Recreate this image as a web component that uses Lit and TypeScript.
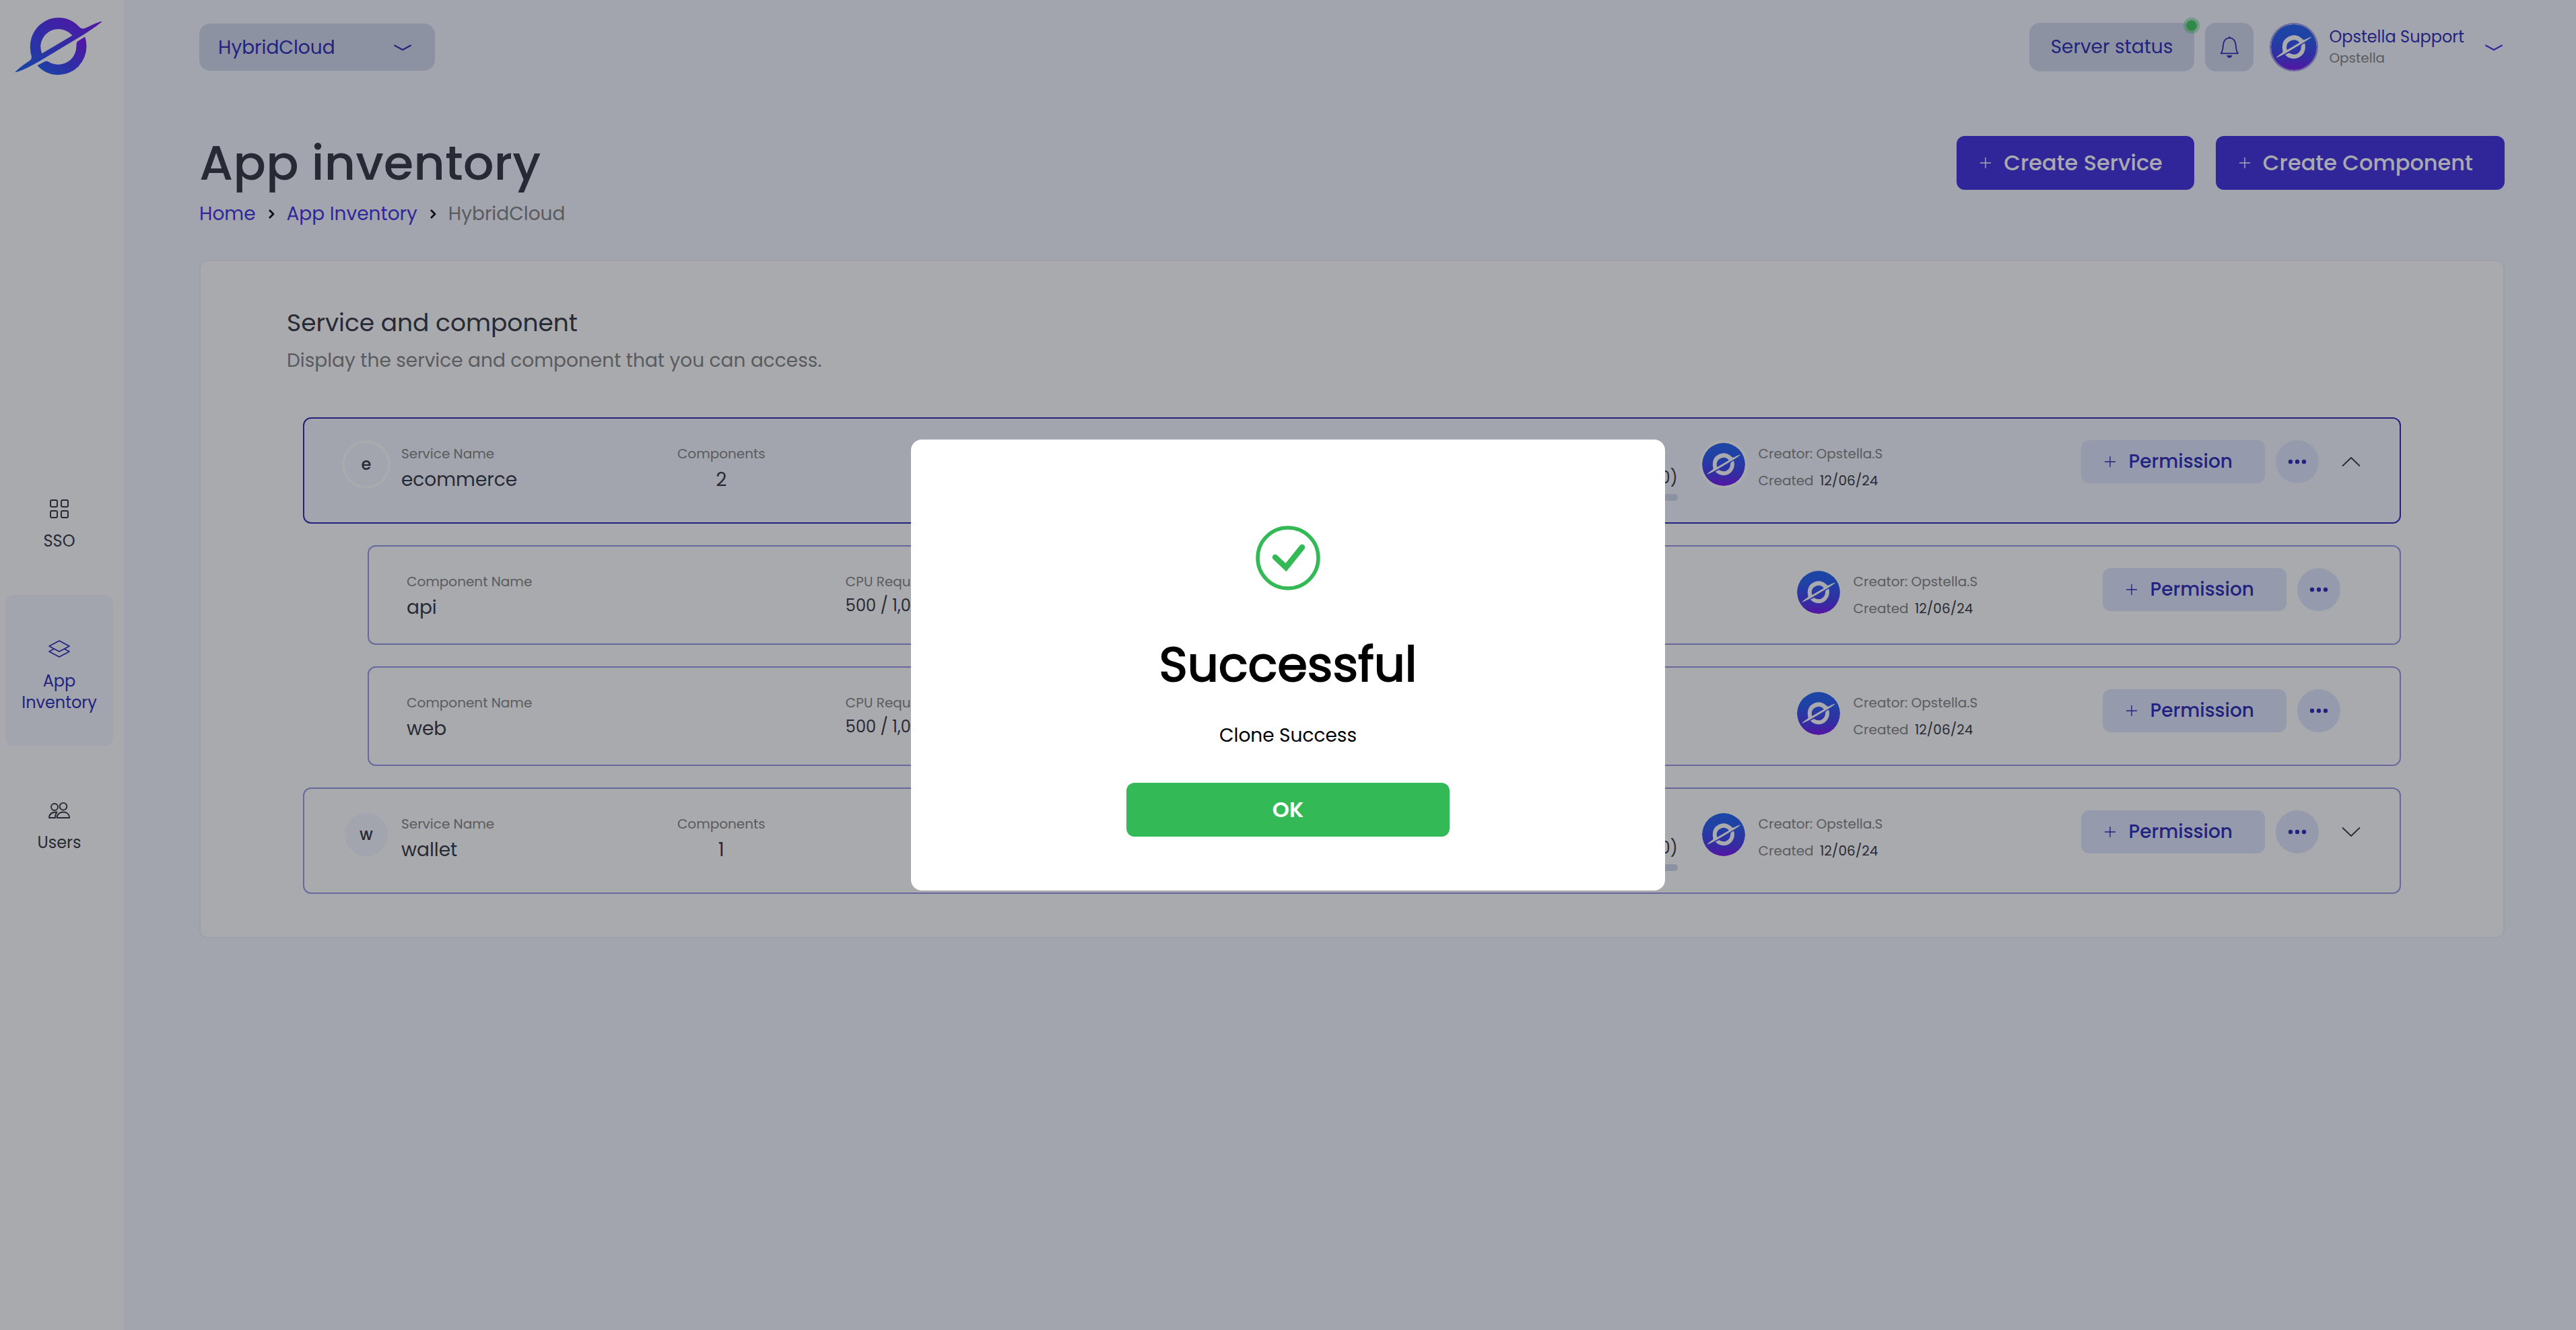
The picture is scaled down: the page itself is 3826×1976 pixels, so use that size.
import { LitElement, html, svg, css, nothing } from "lit";
import { customElement, property, state } from "lit/decorators.js";
import { classMap } from "lit/directives/class-map.js";

const FONT = css`Poppins, Inter, "Noto Sans", sans-serif`;

/* ---------- icons ---------- */

const logoShape = svg`
  <path fill-rule="evenodd" d="M69 317C90 296 112 281 132 268Q144 260 140 244C136 230 135 217 135 204A126 127 0 0 1 340 105C350 114 356 124 368 125C382 126 415 103 450 93Q456 93 450 98C425 118 395 138 372 152L176 270C140 290 105 309 75 318Q66 320 69 317ZM187 236L322 156A80 81 0 0 0 181 204Q181 220 187 236Z"/>
  <path d="M378 162L345 182Q340 186 340 204A80 81 0 0 1 260 285Q235 285 215 272Q208 267 200 271L167 289C190 316 225 331 260 331A125 127 0 0 0 385 204Q385 180 378 162Z"/>`;

const brandLogo = html`
  <svg class="brand" viewBox="67 76 388 257" role="img" aria-label="Opstella">
    <defs>
      <linearGradient id="brand" x1="0" y1="1" x2="1" y2="0">
        <stop offset="0" stop-color="#0f5cf4" />
        <stop offset=".5" stop-color="#3b32f2" />
        <stop offset="1" stop-color="#7a08f2" />
      </linearGradient>
    </defs>
    <g fill="url(#brand)">${logoShape}</g>
  </svg>`;

const gridIcon = html`
  <svg class="nav-icon" viewBox="0 0 32 32" fill="none" stroke="currentColor" stroke-width="2">
    <rect x="3" y="3" width="10" height="10" rx="2" /><rect x="19" y="3" width="10" height="10" rx="2" />
    <rect x="3" y="19" width="10" height="10" rx="2" /><rect x="19" y="19" width="10" height="10" rx="2" />
  </svg>`;

const layersIcon = html`
  <svg class="nav-icon" viewBox="0 0 32 32" fill="none" stroke="currentColor" stroke-width="1.7" stroke-linejoin="round">
    <path d="M1 12L16 4L31 12L16 20Z" />
    <path d="M8.5 16L1 20L16 28L31 20L23.5 16" />
  </svg>`;

const usersIcon = html`
  <svg class="nav-icon" viewBox="0 0 32 32" fill="none" stroke="currentColor" stroke-width="1.9" stroke-linejoin="round">
    <circle cx="9" cy="11" r="5" /><circle cx="22" cy="10.2" r="5.3" />
    <path d="M12.6 27H31C31 21.500 27 18.500 22 18.500S12.600 21.500 12.600 27Z" />
    <path d="M10 27H1C1 21 5.500 18.500 12.600 18.500Q10 21.500 10 27Z" />
  </svg>`;

const bellIcon = html`
  <svg class="bell-icon" viewBox="225 126 96 108" fill="none" stroke="currentColor" stroke-width="5.500" stroke-linejoin="round">
    <path d="M236 208H312Q305 199 303 180C302 158 297 139 274 139C251 139 246 158 245 180Q243 199 236 208Z" />
    <path d="M270 137Q274 130 278 137Z" fill="currentColor" stroke-width="3" />
    <path d="M262 217H286Q284 228 274 228T262 217Z" fill="currentColor" stroke="none" />
  </svg>`;

const shallowChevron = html`
  <svg class="chevron-icon" viewBox="0 0 32 32" fill="none" stroke="currentColor" stroke-width="2" stroke-linecap="round" stroke-linejoin="round">
    <path d="M4 13.500L16 20L28 13.500" />
  </svg>`;

const expandChevron = (open: boolean) => html`
  <svg class="chevron-icon" viewBox="0 0 32 32" fill="none" stroke="currentColor" stroke-width="1.8" stroke-linecap="round" stroke-linejoin="round">
    <path d=${open ? "M3.500 22L16 10L28.500 22" : "M3.500 10L16 22L28.500 10"} />
  </svg>`;

const plusIcon = html`
  <svg class="plus-icon" viewBox="0 0 22 22" fill="none" stroke="currentColor" stroke-width="1.4">
    <path d="M11 3V19M3 11H19" />
  </svg>`;

const dotsIcon = html`
  <svg class="dots-icon" viewBox="0 0 32 32" fill="currentColor">
    <circle cx="6" cy="16" r="3.200" /><circle cx="16" cy="16" r="3.200" /><circle cx="26" cy="16" r="3.200" />
  </svg>`;

const crumbIcon = html`
  <svg class="crumb-icon" viewBox="0 0 12 16" fill="none" stroke="currentColor" stroke-width="2.800" stroke-linejoin="round">
    <path d="M3 2L9 8L3 14" />
  </svg>`;

const successIcon = html`
  <svg class="success-icon" viewBox="0 0 96 96" fill="none" stroke="currentColor" aria-hidden="true">
    <circle cx="48" cy="48" r="45" stroke-width="5.500" />
    <path d="M29 47L45 62L69 32" stroke-width="8.500" stroke-linecap="round" />
  </svg>`;

/* ---------- user avatar ---------- */

@customElement("user-avatar")
export class UserAvatar extends LitElement {
  static styles = css`
    :host { display: block; box-sizing: border-box; border-radius: 50%; overflow: hidden; }
    .disc { display: block; width: 100%; height: 100%; }
  `;
  render() {
    return html`
      <svg class="disc" viewBox="0 0 100 100" role="img" aria-label="Opstella avatar">
        <defs>
          <linearGradient id="disc" x1="0" y1="0" x2="0" y2="1">
            <stop offset="0" stop-color="#1a5cf2" />
            <stop offset=".3" stop-color="#1f55f2" />
            <stop offset=".75" stop-color="#4430ee" />
            <stop offset="1" stop-color="#760af0" />
          </linearGradient>
        </defs>
        <circle cx="50" cy="50" r="50" fill="url(#disc)" />
        <g fill="#fff" transform="translate(11 24) scale(.201) translate(-67 -76)">${logoShape}</g>
      </svg>`;
  }
}

/* ---------- inventory ---------- */

interface Component { name: string; cpu: string; memory: string; creator: string; created: string; }
interface Service extends Component { count: number; open: boolean; components: Component[]; }

const component = (name: string): Component => ({
  name, cpu: "500 / 1,000 m (0)", memory: "512 / 1,024 Mi (0)", creator: "Opstella.S", created: "12/06/24",
});

@customElement("service-list")
export class ServiceList extends LitElement {
  @property({ attribute: false }) services: Service[] = [];

  static styles = css`
    :host { display: flex; flex-direction: column; gap: 32px; font-family: ${FONT}; color: #2c2e3a; }
    .row {
      display: grid; align-items: start; box-sizing: border-box;
      border: 2px solid #9594e6; border-radius: 12px;
    }
    .service {
      grid-template-columns:
        minmax(0, 498fr) minmax(0, 400fr) minmax(0, 555fr) minmax(0, 563fr) minmax(0, 568fr) auto;
      padding: 32px 56px;
    }
    .service.open { border-color: #2422b4; background: #f4f7ff; }
    .component {
      grid-template-columns: minmax(0, 652fr) minmax(0, 700fr) minmax(0, 709fr) minmax(0, 459fr) auto;
      padding: 32px 88px 36px 56px;
      margin-left: 96px;
    }
    .identity { display: flex; gap: 16px; }
    .initial {
      display: grid; place-items: center; box-sizing: border-box; flex: none;
      width: 72px; height: 72px; border: 4px solid #fff; border-radius: 50%;
      background: #f4f7ff; font-size: 24px; font-weight: 500;
    }
    .field { display: flex; flex-direction: column; gap: 10px; padding-top: 8px; }
    .label { font-size: 20px; line-height: 24px; color: #7e7e80; }
    .value { font-size: 28px; line-height: 34px; }
    .count { align-items: center; justify-self: start; }
    .usage { padding-right: 32px; }
    .usage-value { font-size: 24px; line-height: 28px; }
    .service .usage-value { text-align: right; }
    .track { height: 10px; border-radius: 5px; background: #d2d8ef; }
    .creator { display: flex; gap: 16px; }
    .avatar { flex: none; width: 72px; height: 72px; border: 4px solid #fff; }
    .creator .field { gap: 16px; }
    .date { color: #2c2e3a; margin-left: 4px; }
    .actions { display: flex; align-items: center; gap: 16px; }
    button { font-family: inherit; border: 0; padding: 0; cursor: pointer; color: #2422b4; background: #dfe7fe; }
    .permission {
      display: flex; align-items: center; gap: 16px; height: 64px; padding: 0 48px 0 32px;
      border-radius: 12px; font-size: 28px; font-weight: 500;
    }
    .more { display: grid; place-items: center; width: 64px; height: 64px; border-radius: 50%; }
    .toggle { display: grid; background: none; color: #2c2e3a; margin-left: 16px; }
    .plus-icon { width: 22px; height: 22px; }
    .dots-icon, .chevron-icon { width: 32px; height: 32px; }
  `;

  private usage(label: string, value: string, track: boolean) {
    return html`
      <div class="field usage">
        <span class="label">${label}</span>
        <span class="usage-value">${value}</span>
        ${track ? html`<div class="track"></div>` : nothing}
      </div>`;
  }

  private creator(item: Component) {
    return html`
      <div class="creator">
        <user-avatar class="avatar"></user-avatar>
        <div class="field">
          <span class="label">Creator: ${item.creator}</span>
          <span class="label">Created <span class="date">${item.created}</span></span>
        </div>
      </div>`;
  }

  private actions(toggle: unknown = nothing) {
    return html`
      <div class="actions">
        <button class="permission">${plusIcon}<span>Permission</span></button>
        <button class="more" aria-label="More actions">${dotsIcon}</button>
        ${toggle}
      </div>`;
  }

  private toggle(service: Service) {
    service.open = !service.open;
    this.requestUpdate();
  }

  render() {
    return this.services.map((s) => html`
      <article class=${classMap({ row: true, service: true, open: s.open })}>
        <div class="identity">
          <span class="initial">${s.name[0]}</span>
          <div class="field"><span class="label">Service Name</span><span class="value">${s.name}</span></div>
        </div>
        <div class="field count"><span class="label">Components</span><span class="value">${s.count}</span></div>
        ${this.usage("CPU Request / Limit", s.cpu, true)}
        ${this.usage("Memory Request / Limit", s.memory, true)}
        ${this.creator(s)}
        ${this.actions(html`
          <button class="toggle" aria-label="Toggle components" aria-expanded=${s.open} @click=${() => this.toggle(s)}>
            ${expandChevron(s.open)}
          </button>`)}
      </article>
      ${s.open ? s.components.map((c) => html`
        <article class="row component">
          <div class="field"><span class="label">Component Name</span><span class="value">${c.name}</span></div>
          ${this.usage("CPU Request / Limit", c.cpu, false)}
          ${this.usage("Memory Request / Limit", c.memory, false)}
          ${this.creator(c)}
          ${this.actions()}
        </article>`) : nothing}`);
  }
}

/* ---------- page ---------- */

@customElement("app-root")
export class AppRoot extends LitElement {
  @state() private dialogOpen = true;

  private services: Service[] = [
    { ...component("ecommerce"), count: 2, open: true, components: [component("api"), component("web")] },
    { ...component("wallet"), count: 1, open: false, components: [component("wallet-api")] },
  ];

  static styles = css`
    :host {
      display: flex; min-height: 100vh; background: #f4f7ff; color: #2c2e3a;
      font-family: ${FONT}; font-size: 28px; line-height: 36px;
    }
    * { box-sizing: border-box; }
    a { color: inherit; text-decoration: none; }
    button, select { font-family: inherit; border: 0; cursor: pointer; }
    h1, h2, p { margin: 0; font-weight: 400; }

    .sidebar { flex: none; width: 184px; padding: 26px 16px 0 8px; background: #fff; }
    .brand { display: block; width: 130px; height: 86px; margin-left: 14px; }
    .nav { display: flex; flex-direction: column; gap: 16px; margin-top: 564px; }
    .nav-item {
      display: flex; flex-direction: column; align-items: center; gap: 16px;
      padding: 64px 16px 48px; border-radius: 12px;
      font-size: 24px; line-height: 32px; text-align: center;
    }
    .nav-item.active { background: #f4f7ff; color: #2422b4; }
    .nav-icon { width: 32px; height: 32px; }

    .page { flex: 1; min-width: 0; padding: 34px 106px 0 112px; }
    .topbar { display: flex; align-items: center; justify-content: space-between; color: #2422b4; }
    .project { display: grid; align-items: center; width: 350px; }
    .project select {
      grid-area: 1 / 1; width: 100%; height: 70px; padding: 0 28px; appearance: none;
      border-radius: 16px; background: #d2d8ef; color: inherit; font-size: 28px;
    }
    .project .chevron-icon { grid-area: 1 / 1; justify-self: end; margin-right: 32px; pointer-events: none; }
    .chevron-icon { width: 32px; height: 32px; }
    .tools { display: flex; align-items: center; gap: 16px; }
    .tool {
      display: grid; place-items: center; height: 72px; min-width: 72px; padding: 0;
      border-radius: 16px; background: #d2d8ef; color: inherit; font-size: 28px;
    }
    .status { position: relative; padding: 0 32px; }
    .status-dot {
      position: absolute; top: -8px; right: -8px; width: 24px; height: 24px;
      border: 4px solid #38cb5d66; border-radius: 50%; background: #38cb5d; background-clip: padding-box;
    }
    .bell-icon { width: 32px; height: 36px; }
    .account {
      display: flex; align-items: center; gap: 16px; margin-left: 8px; padding: 0;
      background: none; color: inherit; text-align: left;
    }
    .account-avatar { width: 72px; height: 72px; border: 2px solid #9594e6; }
    .account-text { display: flex; flex-direction: column; gap: 2px; margin-right: 12px; }
    .account-name { font-size: 24px; line-height: 30px; }
    .account-org { font-size: 20px; line-height: 28px; color: #7e7e80; }
    .account .chevron-icon { color: #3b27e1; }

    .hero { display: flex; align-items: flex-start; justify-content: space-between; margin-top: 90px; }
    h1 { font-size: 72px; line-height: 92px; font-weight: 500; }
    .crumbs { display: flex; align-items: center; gap: 17px; margin-top: 12px; color: #7e7e80; }
    .crumbs a { color: #3b27e1; }
    .crumb-icon { width: 12px; height: 16px; color: #000; }
    .hero-actions { display: flex; gap: 32px; margin-top: 6px; }
    .create {
      display: flex; align-items: center; gap: 16px; height: 80px; padding: 0 47px 0 32px;
      border-radius: 12px; background: #3b27e1; color: #fff; font-size: 32px; font-weight: 500;
    }
    .plus-icon { width: 22px; height: 22px; }

    .card {
      margin-top: 50px; padding: 64px 128px; background: #fff;
      border: 2px solid #ebeef8; border-radius: 12px;
    }
    h2 { font-size: 36px; line-height: 56px; }
    .lead { margin-top: 10px; color: #7e7e80; }
    .list { margin: 66px 24px 0; }

    .scrim {
      position: fixed; inset: 0; z-index: 10; display: grid; place-items: center;
      background: rgb(33 36 44 / 39%);
    }
    .dialog {
      position: static; display: flex; flex-direction: column; align-items: center;
      width: 1120px; max-width: 90%; margin: 0; padding: 128px 40px 80px;
      border: 0; border-radius: 16px; background: #fff; color: #000;
    }
    .success-icon { width: 96px; height: 96px; color: #34b957; }
    .dialog h2 { margin-top: 68px; font-size: 72px; line-height: 84px; -webkit-text-stroke: 2px currentColor; }
    .dialog p { margin-top: 46px; }
    .ok {
      width: 480px; max-width: 100%; height: 80px; margin-top: 52px; border-radius: 12px;
      background: #34b957; color: #fff; font-size: 32px; font-weight: 600;
    }
  `;

  render() {
    return html`
      <aside class="sidebar">
        ${brandLogo}
        <nav class="nav" aria-label="Main">
          <a class="nav-item" href="#sso">${gridIcon}<span>SSO</span></a>
          <a class="nav-item active" href="#inventory" aria-current="page">${layersIcon}<span>App Inventory</span></a>
          <a class="nav-item" href="#users">${usersIcon}<span>Users</span></a>
        </nav>
      </aside>

      <div class="page">
        <header class="topbar">
          <div class="project">
            <select aria-label="Project"><option>HybridCloud</option></select>
            ${shallowChevron}
          </div>
          <div class="tools">
            <button class="tool status">Server status<span class="status-dot"></span></button>
            <button class="tool" aria-label="Notifications">${bellIcon}</button>
            <button class="account">
              <user-avatar class="account-avatar"></user-avatar>
              <span class="account-text">
                <span class="account-name">Opstella Support</span>
                <span class="account-org">Opstella</span>
              </span>
              ${shallowChevron}
            </button>
          </div>
        </header>

        <main>
          <div class="hero">
            <div>
              <h1>App inventory</h1>
              <nav class="crumbs" aria-label="Breadcrumb">
                <a href="#home">Home</a>${crumbIcon}<a href="#inventory">App Inventory</a>${crumbIcon}<span>HybridCloud</span>
              </nav>
            </div>
            <div class="hero-actions">
              <button class="create">${plusIcon}<span>Create Service</span></button>
              <button class="create">${plusIcon}<span>Create Component</span></button>
            </div>
          </div>

          <section class="card">
            <h2>Service and component</h2>
            <p class="lead">Display the service and component that you can access.</p>
            <service-list class="list" .services=${this.services}></service-list>
          </section>
        </main>
      </div>

      ${this.dialogOpen ? html`
        <div class="scrim">
          <dialog class="dialog" open aria-labelledby="dialog-title">
            ${successIcon}
            <h2 id="dialog-title">Successful</h2>
            <p>Clone Success</p>
            <button class="ok" @click=${() => (this.dialogOpen = false)}>OK</button>
          </dialog>
        </div>` : nothing}`;
  }
}
